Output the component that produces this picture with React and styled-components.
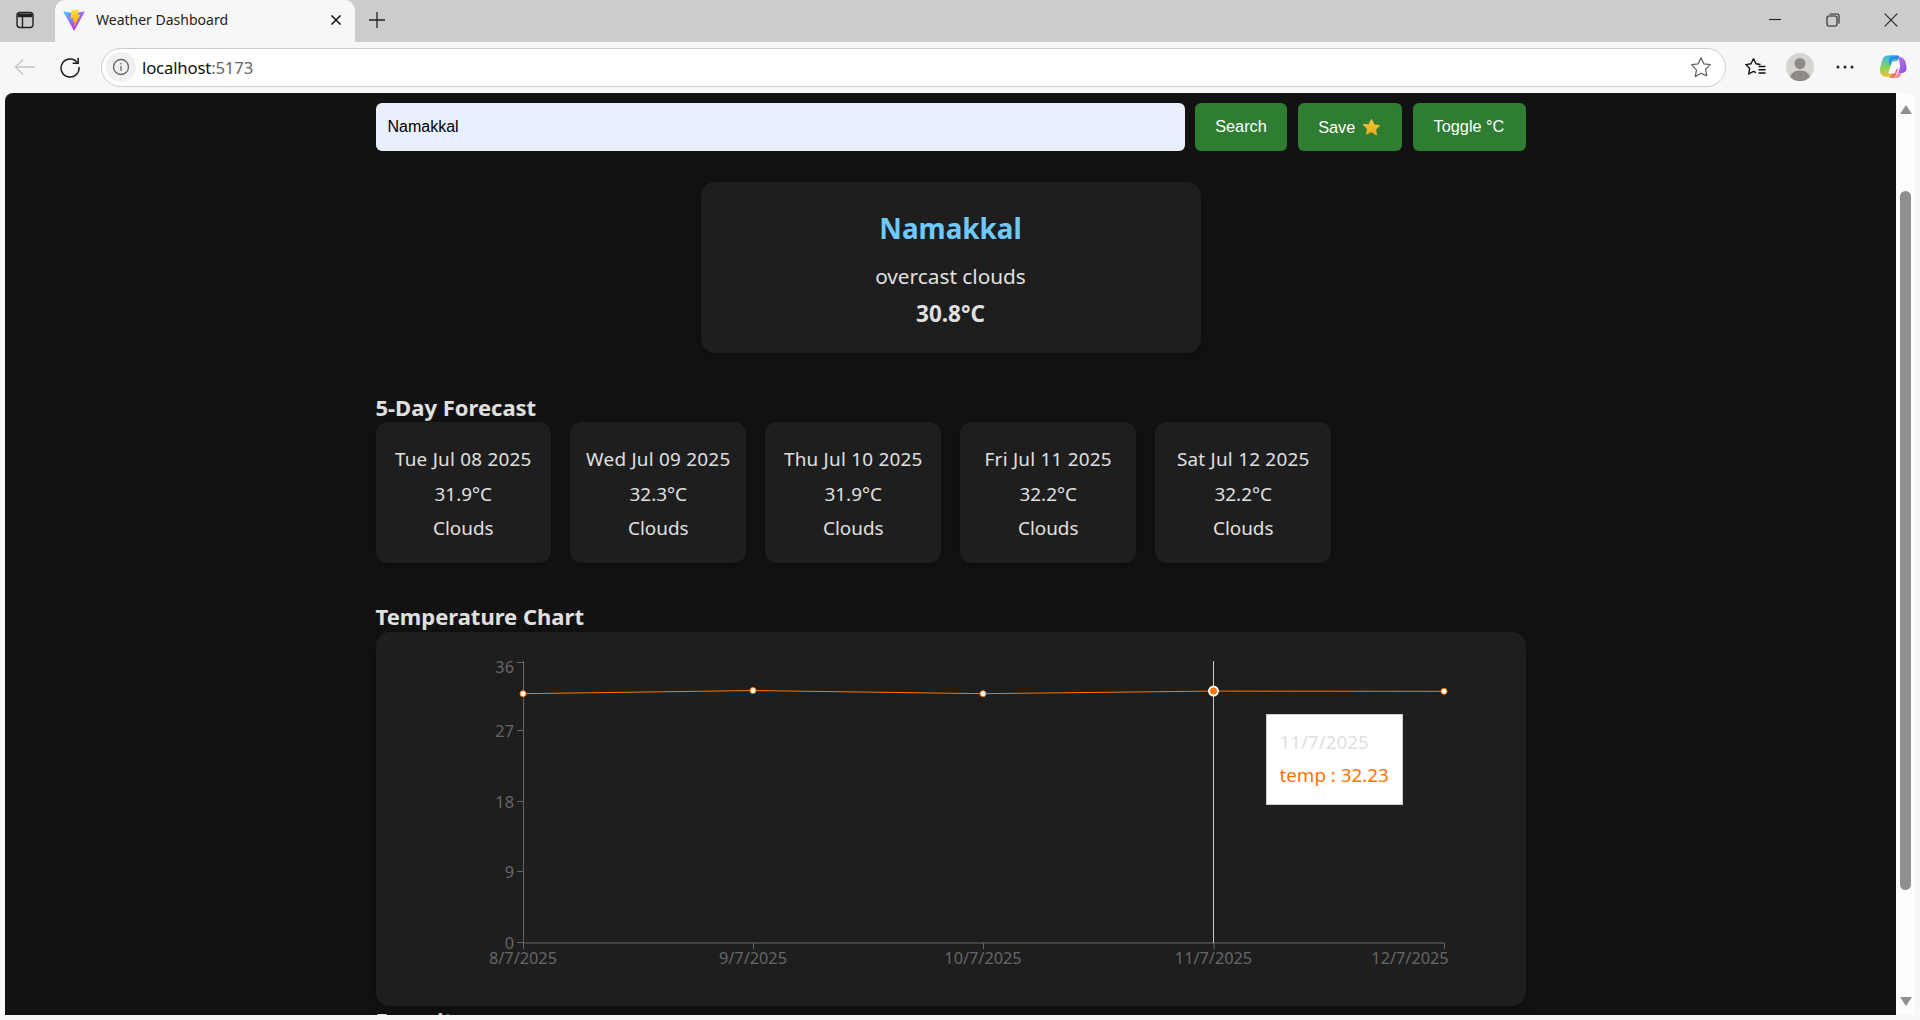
import React from 'react';
import styled, { createGlobalStyle } from 'styled-components';

const Global = createGlobalStyle`
  html, body { margin: 0; padding: 0; height: 100%; overflow: hidden; background: #f7f7f7; }
  #root { height: 100%; }
  * { box-sizing: border-box; }
`;
const UI = `"Noto Sans", "Open Sans", sans-serif`;
const Window = styled.div`height:1020px;display:flex;flex-direction:column;background:#f7f7f7;font-family:${UI};overflow:hidden;`;
const TabStrip = styled.div`height:42px;flex:none;background:#ccc;display:flex;align-items:flex-start;position:relative;`;
const StripIcon = styled.div`width:${p=>p.$w||40}px;height:40px;flex:none;display:flex;align-items:center;justify-content:center;margin-left:${p=>p.$ml||0}px;`;
const Tab = styled.div`width:300px;height:42px;flex:none;background:#f7f7f7;border-radius:10px 10px 0 0;display:flex;align-items:center;padding:0 13px 2px 8px;margin-left:${p=>p.$ml}px;`;
const TabTitle = styled.span`flex:1;margin:0 0 2px 11px;font-size:14px;color:#222;white-space:nowrap;`;
const Spacer = styled.div`flex:1;`;
const Toolbar = styled.div`height:51px;flex:none;background:#f7f7f7;display:flex;align-items:center;padding-bottom:1px;`;
const ToolBtn = styled.div`width:${p=>p.$w}px;height:36px;flex:none;margin-left:${p=>p.$ml||0}px;display:flex;align-items:center;justify-content:center;`;
const Address = styled.div`width:1625px;height:39px;flex:none;margin-left:11px;background:#fff;border:1px solid #ccc;border-radius:20px;display:flex;align-items:center;padding:0 13px 0 4px;`;
const InfoBubble = styled.div`width:30px;height:30px;border-radius:50%;background:#f0f0f0;display:flex;align-items:center;justify-content:center;flex:none;`;
const Url = styled.span`margin-left:6px;font-size:16.7px;color:#111;flex:1;letter-spacing:-.15px;`;
const Port = styled.span`color:#666;`;
const Viewport = styled.div`flex:1;min-height:0;display:flex;padding:0 5px 5px 5px;`;
const Page = styled.main`flex:1;background:#121212;border-radius:8px 0 0 0;overflow:hidden;padding-top:10px;color:#e0e0e0;`;
const Scrollbar = styled.div`width:19px;flex:none;background:#fdfdfd;border-radius:0 8px 0 0;position:relative;display:flex;flex-direction:column;align-items:center;justify-content:space-between;padding:12px 0 9px;`;
const Thumb = styled.div`position:absolute;left:4px;top:98px;width:11px;height:699px;border-radius:6px;background:#8f8f8f;`;
const Arrow = styled.div`width:0;height:0;border-left:6px solid transparent;border-right:6px solid transparent;${p=>p.$down?'border-top:9px solid #8f8f8f;':'border-bottom:9px solid #8f8f8f;'}`;
const Column = styled.div`width:1150px;margin:0 auto;`;
const SearchRow = styled.form`display:flex;gap:10.5px;height:48px;`;
const CityInput = styled.input`flex:1;min-width:0;height:48px;border:none;border-radius:6px;background:#e8f0fe;color:#000;padding:0 12px;font:16px "Liberation Sans",Arial,sans-serif;outline:none;`;
const Button = styled.button`width:${p=>p.$w}px;height:48px;border:none;border-radius:6px;background:#2e7d32;color:#fff;padding:0 0 2px;font:16.3px "Liberation Sans",Arial,sans-serif;display:flex;align-items:center;justify-content:center;gap:7px;flex:none;`;
const SaveLabel = styled.span`position:relative;top:1px;`;
const StarWrap = styled.span`display:flex;position:relative;top:1px;`;
const CurrentCard = styled.section`width:500px;height:171px;margin:31px auto 0;background:#1e1e1e;border-radius:14px;box-shadow:0 4px 12px rgba(0,0,0,.3);padding-top:24px;text-align:center;`;
const City = styled.h2`margin:0;font-size:27.8px;line-height:45px;font-weight:700;color:#6ec9ff;`;
const Desc = styled.p`margin:10px 0 0;font-size:20.8px;line-height:30px;`;
const Temp = styled.p`margin:8px 0 0;font-size:22.5px;line-height:30px;font-weight:700;`;
const SectionTitle = styled.h3`margin:${p=>p.$mt}px 0 2.5px;font-size:22px;line-height:26px;font-weight:700;color:#e0e0e0;white-space:nowrap;`;
const ForecastRow = styled.div`display:flex;gap:19.4px;`;
const DayCard = styled.div`width:175.6px;height:140.5px;padding-top:20px;background:#1e1e1e;border-radius:12px;box-shadow:0 2px 8px rgba(0,0,0,.3);text-align:center;`;
const DayLine = styled.p`margin:0;font-size:18.9px;line-height:34.5px;white-space:nowrap;letter-spacing:${p=>p.$date?'.24px':'0'};`;
const ChartCard = styled.section`position:relative;height:374px;background:#1e1e1e;border-radius:14px;box-shadow:0 4px 12px rgba(0,0,0,.3);`;
const ChartSvg = styled.svg`display:block;width:100%;height:100%;`;
const TipBox = styled.div`position:absolute;left:890px;top:82px;width:137px;height:91px;background:#fff;border:1px solid #ccc;padding:11px 13px;font-size:18.8px;line-height:33px;white-space:nowrap;`;
const TipLabel = styled.div`color:#e0e0e0;`;
const TipValue = styled.div`color:#ff7300;`;

const forecast = [
  ['Tue Jul 08 2025','31.9°C'],['Wed Jul 09 2025','32.3°C'],['Thu Jul 10 2025','31.9°C'],['Fri Jul 11 2025','32.2°C'],['Sat Jul 12 2025','32.2°C'],
];

const Vite = () => (
  <svg width="22" height="22" viewBox="0 0 410 404">
    <defs>
      <linearGradient id="v0" x1="6" y1="33" x2="235" y2="344" gradientUnits="userSpaceOnUse"><stop stopColor="#41D1FF"/><stop offset="1" stopColor="#BD34FE"/></linearGradient>
      <linearGradient id="v1" x1="194" y1="8" x2="236" y2="293" gradientUnits="userSpaceOnUse"><stop stopColor="#FFEA83"/><stop offset=".08" stopColor="#FFDD35"/><stop offset="1" stopColor="#FFA800"/></linearGradient>
    </defs>
    <path d="M399.641 59.5246L215.643 388.545C211.844 395.338 202.084 395.378 198.228 388.618L10.5817 59.5563C6.38087 52.1896 12.6802 43.2665 21.0281 44.7586L205.223 77.6824C206.398 77.8924 207.601 77.8904 208.776 77.6763L389.119 44.8058C397.439 43.2894 403.768 52.1434 399.641 59.5246Z" fill="url(#v0)"/>
    <path d="M292.965 1.5744L156.801 28.2552C154.563 28.6937 152.906 30.5903 152.771 32.8664L144.395 174.33C144.198 177.662 147.258 180.248 150.51 179.498L188.42 170.749C191.967 169.931 195.172 173.055 194.443 176.622L183.18 231.775C182.422 235.487 185.907 238.661 189.532 237.56L212.947 230.446C216.577 229.344 220.065 232.527 219.297 236.242L201.398 322.875C200.278 328.294 207.486 331.249 210.492 326.603L212.5 323.5L323.454 102.072C325.312 98.3645 322.108 94.137 318.036 94.9228L279.014 102.454C275.347 103.161 272.227 99.746 273.262 96.1583L298.731 7.86689C299.767 4.27314 296.636 0.855181 292.965 1.5744Z" fill="url(#v1)"/>
  </svg>
);
const Copilot = () => (
  <svg width="28" height="28" viewBox="0 0 28 28">
    <defs>
      <linearGradient id="c0" x1="0" y1="0" x2="1" y2="1"><stop offset="0" stopColor="#22b8f0"/><stop offset=".5" stopColor="#2f7fe8"/><stop offset="1" stopColor="#7c5ce0"/></linearGradient>
      <linearGradient id="c1" x1="0" y1="0" x2="0" y2="1"><stop offset="0" stopColor="#3fb6e8"/><stop offset=".5" stopColor="#7ed06a"/><stop offset="1" stopColor="#f4c430"/></linearGradient>
      <linearGradient id="c2" x1="0" y1="0" x2="1" y2="1"><stop offset="0" stopColor="#b57be8"/><stop offset="1" stopColor="#8a4fd8"/></linearGradient>
      <linearGradient id="c3" x1="0" y1="0" x2="1" y2="0"><stop offset="0" stopColor="#f4803c"/><stop offset="1" stopColor="#f05fa0"/></linearGradient>
    </defs>
    <path d="M9 2.5h8.5c1.2 0 2 .6 2.4 1.7L13 22c-.5 1.4-1.4 2-2.7 2H8C3 24 .5 20.5 1 15.5L3.3 7C4 4.2 6 2.5 9 2.5z" fill="url(#c1)"/>
    <path d="M11 2.5h7c1.3 0 2.2.6 2.6 1.8L21 6h-5c-1.7 0-2.8.9-3.3 2.4L11 13l-1-4c-.5-2.5-.3-4.5 1-6.5z" fill="url(#c0)"/>
    <path d="M18.5 4H20c3.5 0 5.6 2 6.4 5l1 4.5c.7 3.5-1 6.5-4.7 6.5h-3.5l1.5-5c.8-3-.2-7-2.2-11z" fill="url(#c2)"/>
    <path d="M14.5 16h4.5l-2.4 7c-.5 1.3-1.5 2-2.8 2H9.8c1.5-.4 2.3-1.5 2.8-3z" fill="url(#c3)"/>
    <path d="M18.6 20.2h4.2c-1.2 3-3 4.8-6 4.8h-3c1.8 0 3-1 3.5-2.5z" fill="url(#c3)" opacity=".8"/>
    <path d="M13.3 8.5h5.2c.9 0 1.3.6 1 1.5l-3.3 9.2c-.3.8-.8 1.2-1.6 1.2H9.2z" fill="#fff"/>
  </svg>
);
const GoldStar = () => (
  <svg width="19" height="19" viewBox="0 0 24 24">
    <defs><linearGradient id="gs" x1="0" y1="0" x2="0" y2="1"><stop offset="0" stopColor="#f9c83a"/><stop offset="1" stopColor="#e8a91c"/></linearGradient></defs>
    <path d="M12 2.2l3 6.4 6.9.9-5 4.8 1.3 6.9L12 17l-6.2 3.2 1.3-6.9-5-4.8L9 8.6z" fill="url(#gs)" stroke="url(#gs)" strokeWidth="1.6" strokeLinejoin="round"/>
  </svg>
);

const px = [147, 377, 607, 837.5, 1068];
const vals = [31.9, 32.3, 31.9, 32.23, 32.2];
const yOf = v => 312 - v * (282.5 / 36);
const yTicks = [36, 27, 18, 9, 0];
const xLabels = ['8/7/2025','9/7/2025','10/7/2025','11/7/2025','12/7/2025'];
const labelX = [147, 377, 607, 837.5, 1034];

const Chart = () => (
  <ChartSvg viewBox="0 0 1150 374" fontFamily={UI} fontSize="16.3">
    <line x1="147.5" y1="29" x2="147.5" y2="311" stroke="#666"/>
    <line x1="147" y1="311" x2="1068" y2="311" stroke="#666"/>
    {yTicks.map(t => {
      const y = Math.round(311 - t * (282.5/36)) + (t === 36 ? 1.5 : -.5);
      return <g key={t}>
        <line x1="141" x2="147" y1={y} y2={y} stroke="#666"/>
        <text x="138" y={y + 6 + (t===36?4:0)} textAnchor="end" fill="#666">{t}</text>
      </g>;
    })}
    {px.map((x,i) => <g key={i}>
      <line x1={x+.5} x2={x+.5} y1="311" y2="317" stroke="#666"/>
      <text x={labelX[i]} y="332" textAnchor="middle" fill="#666">{xLabels[i]}</text>
    </g>)}
    <line x1="837.5" x2="837.5" y1="29" y2="311" stroke="#ccc"/>
    <polyline points={px.map((x,i)=>`${x},${yOf(vals[i])}`).join(' ')} fill="none" stroke="#ff7300" strokeWidth="1"/>
    {px.map((x,i) => i===3
      ? <circle key={i} cx={x} cy={yOf(vals[i])} r="4.5" fill="#ff7300" stroke="#fff" strokeWidth="2"/>
      : <circle key={i} cx={x} cy={yOf(vals[i])} r="3" fill="#fff" stroke="#ff7300" strokeWidth="1"/>)}
  </ChartSvg>
);

export default function App() {
  return (
    <Window>
      <Global/>
      <TabStrip>
        <StripIcon $w="40" $ml="5">
          <svg width="18" height="18" viewBox="0 0 18 18" fill="none" stroke="#222" strokeWidth="1.4"><rect x="1" y="1.5" width="16" height="15" rx="3"/><path d="M1.5 5.5h15M6.5 5.5v11"/><path d="M2 2.5h14v3H2z" fill="#222" stroke="none"/></svg>
        </StripIcon>
        <Tab $ml="10">
          <Vite/>
          <TabTitle>Weather Dashboard</TabTitle>
          <svg width="12" height="12" viewBox="0 0 12 12" stroke="#111" strokeWidth="1.5"><path d="M1.5 1.5l9 9M10.5 1.5l-9 9"/></svg>
        </Tab>
        <StripIcon $w="44">
          <svg width="18" height="18" viewBox="0 0 18 18" stroke="#222" strokeWidth="1.3"><path d="M9 1v16M1 9h16"/></svg>
        </StripIcon>
        <Spacer/>
        <StripIcon $w="58"><svg width="14" height="14" viewBox="0 0 14 14" stroke="#222" strokeWidth="1.1"><path d="M1 6.5h12"/></svg></StripIcon>
        <StripIcon $w="58"><svg width="14" height="14" viewBox="0 0 14 14" fill="none" stroke="#222" strokeWidth="1.1"><rect x="1" y="3" width="10" height="10" rx="1.5"/><path d="M3.5 1h8a1.5 1.5 0 0 1 1.5 1.5V10.5"/></svg></StripIcon>
        <StripIcon $w="58"><svg width="14" height="14" viewBox="0 0 14 14" stroke="#222" strokeWidth="1.1"><path d="M.7.7l12.6 12.6M13.3.7L.7 13.3"/></svg></StripIcon>
      </TabStrip>
      <Toolbar>
        <ToolBtn $w="40" $ml="5">
          <svg width="22" height="18" viewBox="0 0 22 18" fill="none" stroke="#c4c4c4" strokeWidth="1.3"><path d="M21 9H1.5M9 1.5L1.5 9 9 16.5"/></svg>
        </ToolBtn>
        <ToolBtn $w="40" $ml="5">
          <svg width="22" height="22" viewBox="0 0 22 22" fill="none" stroke="#1c1c1c" strokeWidth="1.5"><path d="M18.5 7A9 9 0 1 0 20 11"/><path d="M19.2 1.8V7.3H13.7"/></svg>
        </ToolBtn>
        <Address>
          <InfoBubble>
            <svg width="18" height="18" viewBox="0 0 18 18" fill="none" stroke="#666" strokeWidth="1.3"><circle cx="9" cy="9" r="7.5"/><path d="M9 8v5M9 5v1.5"/></svg>
          </InfoBubble>
          <Url>localhost<Port>:5173</Port></Url>
          <svg width="22" height="22" viewBox="0 0 22 22" fill="none" stroke="#666" strokeWidth="1.3" strokeLinejoin="round"><path d="M11 1.8l2.8 6 6.5.8-4.8 4.5 1.3 6.5L11 17.300l-5.800 3.300 1.300-6.500L1.700 8.600l6.500-.8z"/></svg>
        </Address>
        <ToolBtn $w="22" $ml="19">
          <svg width="22" height="20" viewBox="0 0 22 20" fill="none" stroke="#111" strokeWidth="1.4" strokeLinejoin="round"><path d="M8.5 1.5l2.400 5.300 4.600.7M8.500 1.500L6 6.800.9 7.600l3.800 3.800-1 5.600 4.800-2.700 2.500 1.300"/><path d="M13.500 9.500h7M13.500 12.800h7M13.500 16h7"/></svg>
        </ToolBtn>
        <ToolBtn $w="28" $ml="19">
          <svg width="28" height="28" viewBox="0 0 28 28"><circle cx="14" cy="14" r="14" fill="#d6d4d0"/><circle cx="14" cy="10.5" r="5.5" fill="#8f8a85"/><path d="M4 24c1.500-4.500 5.500-6.500 10-6.500s8.500 2 10 6.500a14 14 0 0 1-20 0z" fill="#8f8a85"/></svg>
        </ToolBtn>
        <ToolBtn $w="18" $ml="22">
          <svg width="18" height="4" viewBox="0 0 18 4" fill="#222"><circle cx="2" cy="2" r="1.5"/><circle cx="9" cy="2" r="1.5"/><circle cx="16" cy="2" r="1.5"/></svg>
        </ToolBtn>
        <ToolBtn $w="28" $ml="25"><Copilot/></ToolBtn>
      </Toolbar>
      <Viewport>
        <Page>
          <Column>
            <SearchRow onSubmit={e=>e.preventDefault()}>
              <CityInput defaultValue="Namakkal"/>
              <Button type="button" $w="92">Search</Button>
              <Button type="button" $w="104.5"><SaveLabel>Save</SaveLabel><StarWrap><GoldStar/></StarWrap></Button>
              <Button type="button" $w="113">Toggle °C</Button>
            </SearchRow>
            <CurrentCard>
              <City>Namakkal</City>
              <Desc>overcast clouds</Desc>
              <Temp>30.8°C</Temp>
            </CurrentCard>
            <SectionTitle $mt="40.5">5-Day Forecast</SectionTitle>
            <ForecastRow>
              {forecast.map(([d,t]) => (
                <DayCard key={d}>
                  <DayLine $date>{d}</DayLine>
                  <DayLine>{t}</DayLine>
                  <DayLine>Clouds</DayLine>
                </DayCard>
              ))}
            </ForecastRow>
            <SectionTitle $mt="40.5">Temperature Chart</SectionTitle>
            <ChartCard>
              <Chart/>
              <TipBox>
                <TipLabel>11/7/2025</TipLabel>
                <TipValue>temp : 32.23</TipValue>
              </TipBox>
            </ChartCard>
            <SectionTitle $mt="1">Favorites</SectionTitle>
          </Column>
        </Page>
        <Scrollbar>
          <Arrow/>
          <Thumb/>
          <Arrow $down/>
        </Scrollbar>
      </Viewport>
    </Window>
  );
}
